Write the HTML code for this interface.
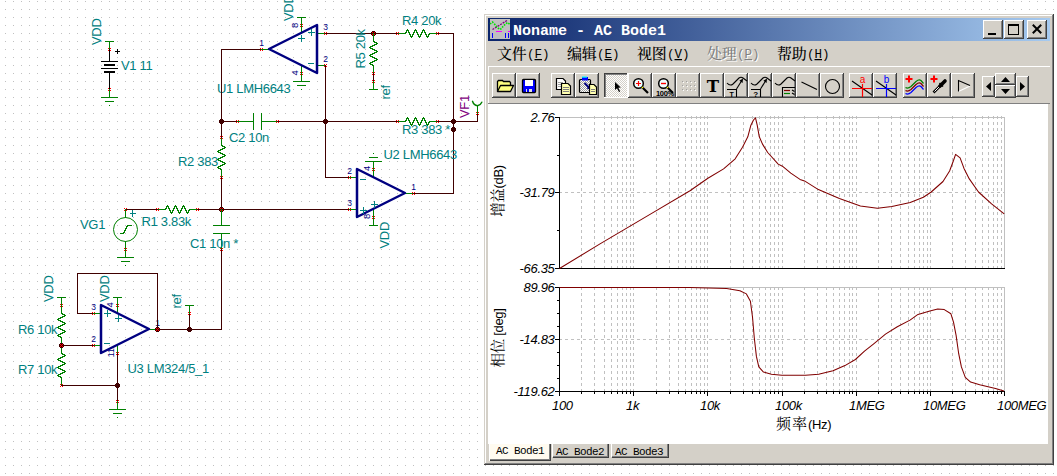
<!DOCTYPE html>
<html lang="zh"><head><meta charset="utf-8"><title>AC Bode1</title>
<style>
html,body{margin:0;padding:0;background:#fff;}
body{width:1057px;height:476px;overflow:hidden;}
svg{display:block;}
text{font-family:"Liberation Sans",Arial,sans-serif;letter-spacing:-0.32px;}
.cj{font-family:"Liberation Sans","Noto Sans CJK SC",sans-serif;}
.sj{font-family:"Liberation Serif","Noto Serif CJK SC",serif;}
.mono{font-family:"Liberation Mono",monospace;letter-spacing:0;}
</style></head><body>
<svg width="1057" height="476" viewBox="0 0 1057 476">
<defs>
<pattern id="grid" x="5" y="1" width="8" height="8" patternUnits="userSpaceOnUse"><rect x="0" y="0" width="1" height="1" fill="#c0c0c0"/></pattern>
<linearGradient id="tg" x1="0" y1="0" x2="1" y2="0"><stop offset="0" stop-color="#0a246a"/><stop offset="1" stop-color="#a6caf0"/></linearGradient>
<pattern id="chk2" x="0" y="0" width="2" height="2" patternUnits="userSpaceOnUse"><rect width="2" height="2" fill="#fff"/><rect x="0" y="0" width="1" height="1" fill="#a0a0a0"/><rect x="1" y="1" width="1" height="1" fill="#a0a0a0"/></pattern>
<pattern id="chk" x="0" y="0" width="2" height="2" patternUnits="userSpaceOnUse"><rect width="2" height="2" fill="#fff"/><rect x="0" y="0" width="1" height="1" fill="#d4d0c8"/><rect x="1" y="1" width="1" height="1" fill="#d4d0c8"/></pattern>
</defs>
<rect width="1057" height="476" fill="#fff"/>
<rect width="1057" height="476" fill="url(#grid)"/>

<g id="schematic">
<rect x="105" y="41" width="9" height="1" fill="#008000"/>
<rect x="109" y="41" width="1" height="9" fill="#008000"/>
<rect x="109" y="49" width="1" height="13" fill="#000"/>
<rect x="108" y="48" width="1" height="1" fill="#ff0000"/>
<rect x="110" y="48" width="1" height="1" fill="#ff0000"/>
<rect x="108" y="50" width="1" height="1" fill="#ff0000"/>
<rect x="110" y="50" width="1" height="1" fill="#ff0000"/>
<rect x="101" y="61" width="17" height="1" fill="#000"/>
<rect x="104" y="64" width="11" height="2" fill="#000"/>
<rect x="101" y="68" width="17" height="1" fill="#000"/>
<rect x="104" y="71" width="11" height="2" fill="#000"/>
<rect x="109" y="72" width="1" height="18" fill="#000"/>
<rect x="108" y="88" width="1" height="1" fill="#ff0000"/>
<rect x="110" y="88" width="1" height="1" fill="#ff0000"/>
<rect x="108" y="90" width="1" height="1" fill="#ff0000"/>
<rect x="110" y="90" width="1" height="1" fill="#ff0000"/>
<rect x="109" y="89" width="1" height="9" fill="#008000"/>
<rect x="101" y="97" width="17" height="1" fill="#008000"/>
<rect x="105" y="101" width="9" height="1" fill="#008000"/>
<rect x="109" y="105" width="1" height="1" fill="#008000"/>
<rect x="115" y="51" width="5" height="1" fill="#000"/>
<rect x="117" y="49" width="1" height="5" fill="#000"/>
<text x="121" y="70" font-size="13" fill="#008080" >V1 11</text>
<text transform="translate(101,45) rotate(-90)" font-size="13" fill="#008080" >VDD</text>
<rect x="221" y="49" width="41" height="1" fill="#400000"/>
<rect x="261" y="49" width="9" height="1" fill="#008000"/>
<rect x="260" y="48" width="1" height="1" fill="#ff0000"/>
<rect x="262" y="48" width="1" height="1" fill="#ff0000"/>
<rect x="260" y="50" width="1" height="1" fill="#ff0000"/>
<rect x="262" y="50" width="1" height="1" fill="#ff0000"/>
<rect x="317" y="33" width="9" height="1" fill="#008000"/>
<rect x="324" y="32" width="1" height="1" fill="#ff0000"/>
<rect x="326" y="32" width="1" height="1" fill="#ff0000"/>
<rect x="324" y="34" width="1" height="1" fill="#ff0000"/>
<rect x="326" y="34" width="1" height="1" fill="#ff0000"/>
<rect x="317" y="65" width="9" height="1" fill="#008000"/>
<rect x="324" y="64" width="1" height="1" fill="#ff0000"/>
<rect x="326" y="64" width="1" height="1" fill="#ff0000"/>
<rect x="324" y="66" width="1" height="1" fill="#ff0000"/>
<rect x="326" y="66" width="1" height="1" fill="#ff0000"/>
<rect x="301" y="17" width="1" height="17" fill="#008000"/>
<rect x="297" y="17" width="9" height="1" fill="#008000"/>
<rect x="300" y="24" width="1" height="1" fill="#ff0000"/>
<rect x="302" y="24" width="1" height="1" fill="#ff0000"/>
<rect x="300" y="26" width="1" height="1" fill="#ff0000"/>
<rect x="302" y="26" width="1" height="1" fill="#ff0000"/>
<rect x="301" y="65" width="1" height="17" fill="#008000"/>
<rect x="300" y="72" width="1" height="1" fill="#ff0000"/>
<rect x="302" y="72" width="1" height="1" fill="#ff0000"/>
<rect x="300" y="74" width="1" height="1" fill="#ff0000"/>
<rect x="302" y="74" width="1" height="1" fill="#ff0000"/>
<rect x="293" y="81" width="17" height="1" fill="#008000"/>
<rect x="297" y="85" width="9" height="1" fill="#008000"/>
<rect x="301" y="89" width="1" height="1" fill="#008000"/>
<polygon points="317,25 317,73 269,49" fill="none" stroke="#000080" stroke-width="2.5" stroke-linejoin="round"/>
<rect x="308" y="32" width="7" height="1" fill="#008080"/>
<rect x="311" y="29" width="1" height="7" fill="#008080"/>
<rect x="298" y="38" width="7" height="1" fill="#008080"/>
<rect x="301" y="35" width="1" height="7" fill="#008080"/>
<rect x="308" y="63" width="6" height="1" fill="#008080"/>
<text x="261.5" y="46" font-size="8.5" fill="#000080" text-anchor="middle" >1</text>
<text x="325.5" y="30" font-size="8.5" fill="#000080" text-anchor="middle" >3</text>
<text x="325.5" y="62" font-size="8.5" fill="#000080" text-anchor="middle" >2</text>
<text transform="translate(297.5,25.5) rotate(-90)" font-size="9.5" fill="#000080" text-anchor="middle" >8</text>
<text transform="translate(297.5,73) rotate(-90)" font-size="9.5" fill="#000080" text-anchor="middle" >4</text>
<text x="217" y="93" font-size="13" fill="#008080" >U1 LMH6643</text>
<text transform="translate(293,21) rotate(-90)" font-size="13" fill="#008080" >VDD</text>
<rect x="325" y="33" width="73" height="1" fill="#400000"/>
<rect x="396" y="32" width="1" height="1" fill="#ff0000"/>
<rect x="398" y="32" width="1" height="1" fill="#ff0000"/>
<rect x="396" y="34" width="1" height="1" fill="#ff0000"/>
<rect x="398" y="34" width="1" height="1" fill="#ff0000"/>
<rect x="398" y="33" width="8" height="1" fill="#008000"/>
<polyline points="405.50,33.50 407.50,29.50 411.50,37.50 415.50,29.50 419.50,37.50 423.50,29.50 427.50,37.50 429.50,33.50" fill="none" stroke="#008000" stroke-width="1" stroke-linejoin="bevel" shape-rendering="crispEdges" />
<rect x="429" y="33" width="8" height="1" fill="#008000"/>
<rect x="436" y="32" width="1" height="1" fill="#ff0000"/>
<rect x="438" y="32" width="1" height="1" fill="#ff0000"/>
<rect x="436" y="34" width="1" height="1" fill="#ff0000"/>
<rect x="438" y="34" width="1" height="1" fill="#ff0000"/>
<rect x="437" y="33" width="17" height="1" fill="#400000"/>
<rect x="453" y="33" width="1" height="161" fill="#400000"/>
<rect x="372" y="31" width="3" height="5" fill="#400000"/><rect x="371" y="32" width="5" height="3" fill="#400000"/>
<rect x="372" y="32" width="1" height="1" fill="#ff0000"/>
<rect x="374" y="32" width="1" height="1" fill="#ff0000"/>
<rect x="372" y="34" width="1" height="1" fill="#ff0000"/>
<rect x="374" y="34" width="1" height="1" fill="#ff0000"/>
<rect x="373" y="33" width="1" height="1" fill="#ff0000"/>
<text x="402" y="25" font-size="13" fill="#008080" >R4 20k</text>
<rect x="373" y="33" width="1" height="9" fill="#008000"/>
<polyline points="373.50,41.50 377.50,43.50 369.50,47.50 377.50,51.50 369.50,55.50 377.50,59.50 369.50,63.50 373.50,65.50" fill="none" stroke="#008000" stroke-width="1" stroke-linejoin="bevel" shape-rendering="crispEdges" />
<rect x="373" y="65" width="1" height="9" fill="#008000"/>
<rect x="372" y="72" width="1" height="1" fill="#ff0000"/>
<rect x="374" y="72" width="1" height="1" fill="#ff0000"/>
<rect x="372" y="74" width="1" height="1" fill="#ff0000"/>
<rect x="374" y="74" width="1" height="1" fill="#ff0000"/>
<rect x="373" y="73" width="1" height="9" fill="#400000"/>
<rect x="372" y="80" width="1" height="1" fill="#ff0000"/>
<rect x="374" y="80" width="1" height="1" fill="#ff0000"/>
<rect x="372" y="82" width="1" height="1" fill="#ff0000"/>
<rect x="374" y="82" width="1" height="1" fill="#ff0000"/>
<rect x="373" y="81" width="1" height="9" fill="#008000"/>
<rect x="369" y="89" width="9" height="1" fill="#008000"/>
<text transform="translate(364.7,68.5) rotate(-90)" font-size="13" fill="#008080" >R5 20k</text>
<text transform="translate(390,99.5) rotate(-90)" font-size="13" fill="#008080" >ref</text>
<rect x="221" y="49" width="1" height="89" fill="#400000"/>
<rect x="220" y="119" width="3" height="5" fill="#400000"/><rect x="219" y="120" width="5" height="3" fill="#400000"/>
<rect x="221" y="121" width="17" height="1" fill="#400000"/>
<rect x="236" y="120" width="1" height="1" fill="#ff0000"/>
<rect x="238" y="120" width="1" height="1" fill="#ff0000"/>
<rect x="236" y="122" width="1" height="1" fill="#ff0000"/>
<rect x="238" y="122" width="1" height="1" fill="#ff0000"/>
<rect x="237" y="121" width="17" height="1" fill="#008000"/>
<rect x="253" y="113" width="1" height="17" fill="#008000"/>
<rect x="261" y="113" width="1" height="17" fill="#008000"/>
<rect x="261" y="121" width="17" height="1" fill="#008000"/>
<rect x="276" y="120" width="1" height="1" fill="#ff0000"/>
<rect x="278" y="120" width="1" height="1" fill="#ff0000"/>
<rect x="276" y="122" width="1" height="1" fill="#ff0000"/>
<rect x="278" y="122" width="1" height="1" fill="#ff0000"/>
<rect x="277" y="121" width="121" height="1" fill="#400000"/>
<rect x="324" y="119" width="3" height="5" fill="#400000"/><rect x="323" y="120" width="5" height="3" fill="#400000"/>
<rect x="396" y="120" width="1" height="1" fill="#ff0000"/>
<rect x="398" y="120" width="1" height="1" fill="#ff0000"/>
<rect x="396" y="122" width="1" height="1" fill="#ff0000"/>
<rect x="398" y="122" width="1" height="1" fill="#ff0000"/>
<rect x="398" y="121" width="8" height="1" fill="#008000"/>
<polyline points="405.50,121.50 407.50,117.50 411.50,125.50 415.50,117.50 419.50,125.50 423.50,117.50 427.50,125.50 429.50,121.50" fill="none" stroke="#008000" stroke-width="1" stroke-linejoin="bevel" shape-rendering="crispEdges" />
<rect x="429" y="121" width="8" height="1" fill="#008000"/>
<rect x="436" y="120" width="1" height="1" fill="#ff0000"/>
<rect x="438" y="120" width="1" height="1" fill="#ff0000"/>
<rect x="436" y="122" width="1" height="1" fill="#ff0000"/>
<rect x="438" y="122" width="1" height="1" fill="#ff0000"/>
<rect x="437" y="121" width="41" height="1" fill="#400000"/>
<rect x="452" y="119" width="3" height="5" fill="#400000"/><rect x="451" y="120" width="5" height="3" fill="#400000"/>
<rect x="452" y="127" width="3" height="5" fill="#400000"/><rect x="451" y="128" width="5" height="3" fill="#400000"/>
<text x="229" y="142" font-size="13" fill="#008080" >C2 10n</text>
<text x="402" y="134" font-size="13" fill="#008080" >R3 383 *</text>
<rect x="477" y="113" width="1" height="9" fill="#400000"/>
<rect x="476" y="112" width="1" height="1" fill="#ff0000"/>
<rect x="478" y="112" width="1" height="1" fill="#ff0000"/>
<rect x="476" y="114" width="1" height="1" fill="#ff0000"/>
<rect x="478" y="114" width="1" height="1" fill="#ff0000"/>
<rect x="477" y="105" width="1" height="9" fill="#008000"/>
<path d="M477.5,105.7 Q473.7,105.3 472.5,101.3 M477.5,105.7 Q480.7,105 481.8,102.2" fill="none" stroke="#008000" stroke-width="1.4" stroke-linecap="round"/>
<text transform="translate(468.5,118) rotate(-90)" font-size="13" fill="#800080" >VF1</text>
<rect x="325" y="65" width="1" height="113" fill="#400000"/>
<rect x="325" y="177" width="25" height="1" fill="#400000"/>
<rect x="348" y="176" width="1" height="1" fill="#ff0000"/>
<rect x="350" y="176" width="1" height="1" fill="#ff0000"/>
<rect x="348" y="178" width="1" height="1" fill="#ff0000"/>
<rect x="350" y="178" width="1" height="1" fill="#ff0000"/>
<rect x="349" y="177" width="9" height="1" fill="#008000"/>
<rect x="220" y="136" width="1" height="1" fill="#ff0000"/>
<rect x="222" y="136" width="1" height="1" fill="#ff0000"/>
<rect x="220" y="138" width="1" height="1" fill="#ff0000"/>
<rect x="222" y="138" width="1" height="1" fill="#ff0000"/>
<rect x="221" y="138" width="1" height="8" fill="#008000"/>
<polyline points="221.50,145.50 225.50,147.50 217.50,151.50 225.50,155.50 217.50,159.50 225.50,163.50 217.50,167.50 221.50,169.50" fill="none" stroke="#008000" stroke-width="1" stroke-linejoin="bevel" shape-rendering="crispEdges" />
<rect x="221" y="169" width="1" height="8" fill="#008000"/>
<rect x="220" y="176" width="1" height="1" fill="#ff0000"/>
<rect x="222" y="176" width="1" height="1" fill="#ff0000"/>
<rect x="220" y="178" width="1" height="1" fill="#ff0000"/>
<rect x="222" y="178" width="1" height="1" fill="#ff0000"/>
<rect x="221" y="177" width="1" height="33" fill="#400000"/>
<text x="178" y="166" font-size="13" fill="#008080" >R2 383</text>
<rect x="125" y="209" width="33" height="1" fill="#400000"/>
<rect x="124" y="208" width="1" height="1" fill="#ff0000"/>
<rect x="126" y="208" width="1" height="1" fill="#ff0000"/>
<rect x="124" y="210" width="1" height="1" fill="#ff0000"/>
<rect x="126" y="210" width="1" height="1" fill="#ff0000"/>
<rect x="156" y="208" width="1" height="1" fill="#ff0000"/>
<rect x="158" y="208" width="1" height="1" fill="#ff0000"/>
<rect x="156" y="210" width="1" height="1" fill="#ff0000"/>
<rect x="158" y="210" width="1" height="1" fill="#ff0000"/>
<rect x="158" y="209" width="8" height="1" fill="#008000"/>
<polyline points="165.50,209.50 167.50,205.50 171.50,213.50 175.50,205.50 179.50,213.50 183.50,205.50 187.50,213.50 189.50,209.50" fill="none" stroke="#008000" stroke-width="1" stroke-linejoin="bevel" shape-rendering="crispEdges" />
<rect x="189" y="209" width="8" height="1" fill="#008000"/>
<rect x="196" y="208" width="1" height="1" fill="#ff0000"/>
<rect x="198" y="208" width="1" height="1" fill="#ff0000"/>
<rect x="196" y="210" width="1" height="1" fill="#ff0000"/>
<rect x="198" y="210" width="1" height="1" fill="#ff0000"/>
<rect x="197" y="209" width="153" height="1" fill="#400000"/>
<rect x="348" y="208" width="1" height="1" fill="#ff0000"/>
<rect x="350" y="208" width="1" height="1" fill="#ff0000"/>
<rect x="348" y="210" width="1" height="1" fill="#ff0000"/>
<rect x="350" y="210" width="1" height="1" fill="#ff0000"/>
<rect x="349" y="209" width="9" height="1" fill="#008000"/>
<rect x="220" y="207" width="3" height="5" fill="#400000"/><rect x="219" y="208" width="5" height="3" fill="#400000"/>
<rect x="220" y="208" width="1" height="1" fill="#ff0000"/>
<rect x="222" y="208" width="1" height="1" fill="#ff0000"/>
<rect x="220" y="210" width="1" height="1" fill="#ff0000"/>
<rect x="222" y="210" width="1" height="1" fill="#ff0000"/>
<rect x="221" y="209" width="1" height="1" fill="#ff0000"/>
<text x="141.5" y="226" font-size="13" fill="#008080" >R1 3.83k</text>
<rect x="125" y="209" width="1" height="9" fill="#008000"/>
<circle cx="125.5" cy="229.5" r="12" fill="none" stroke="#008000" stroke-width="1"/>
<rect x="125" y="241" width="1" height="17" fill="#008000"/>
<rect x="124" y="248" width="1" height="1" fill="#ff0000"/>
<rect x="126" y="248" width="1" height="1" fill="#ff0000"/>
<rect x="124" y="250" width="1" height="1" fill="#ff0000"/>
<rect x="126" y="250" width="1" height="1" fill="#ff0000"/>
<rect x="117" y="257" width="17" height="1" fill="#008000"/>
<rect x="121" y="261" width="9" height="1" fill="#008000"/>
<rect x="125" y="265" width="1" height="1" fill="#008000"/>
<polyline points="119.50,233.50 123.50,233.50 127.50,225.50 131.50,225.50" fill="none" stroke="#008000" stroke-width="1" stroke-linejoin="bevel" shape-rendering="crispEdges" />
<rect x="130" y="213" width="6" height="1" fill="#008080"/>
<rect x="132" y="210" width="1" height="7" fill="#008080"/>
<text x="80" y="229" font-size="13" fill="#008080" >VG1</text>
<rect x="221" y="209" width="1" height="17" fill="#008000"/>
<rect x="213" y="225" width="17" height="1" fill="#008000"/>
<rect x="213" y="233" width="17" height="1" fill="#008000"/>
<rect x="221" y="233" width="1" height="17" fill="#008000"/>
<rect x="220" y="248" width="1" height="1" fill="#ff0000"/>
<rect x="222" y="248" width="1" height="1" fill="#ff0000"/>
<rect x="220" y="250" width="1" height="1" fill="#ff0000"/>
<rect x="222" y="250" width="1" height="1" fill="#ff0000"/>
<rect x="221" y="249" width="1" height="81" fill="#400000"/>
<text x="190" y="248" font-size="13" fill="#008080" >C1 10n *</text>
<rect x="405" y="193" width="9" height="1" fill="#008000"/>
<rect x="412" y="192" width="1" height="1" fill="#ff0000"/>
<rect x="414" y="192" width="1" height="1" fill="#ff0000"/>
<rect x="412" y="194" width="1" height="1" fill="#ff0000"/>
<rect x="414" y="194" width="1" height="1" fill="#ff0000"/>
<rect x="413" y="193" width="41" height="1" fill="#400000"/>
<rect x="373" y="161" width="1" height="17" fill="#008000"/>
<rect x="365" y="161" width="17" height="1" fill="#008000"/>
<rect x="369" y="157" width="9" height="1" fill="#008000"/>
<rect x="373" y="153" width="1" height="1" fill="#008000"/>
<rect x="372" y="168" width="1" height="1" fill="#ff0000"/>
<rect x="374" y="168" width="1" height="1" fill="#ff0000"/>
<rect x="372" y="170" width="1" height="1" fill="#ff0000"/>
<rect x="374" y="170" width="1" height="1" fill="#ff0000"/>
<rect x="373" y="209" width="1" height="17" fill="#008000"/>
<rect x="369" y="225" width="9" height="1" fill="#008000"/>
<rect x="372" y="216" width="1" height="1" fill="#ff0000"/>
<rect x="374" y="216" width="1" height="1" fill="#ff0000"/>
<rect x="372" y="218" width="1" height="1" fill="#ff0000"/>
<rect x="374" y="218" width="1" height="1" fill="#ff0000"/>
<polygon points="357,169 357,217 405,193" fill="none" stroke="#000080" stroke-width="2.5" stroke-linejoin="round"/>
<rect x="360" y="179" width="6" height="1" fill="#008080"/>
<rect x="360" y="210" width="7" height="1" fill="#008080"/>
<rect x="363" y="207" width="1" height="7" fill="#008080"/>
<rect x="371" y="204" width="7" height="1" fill="#008080"/>
<rect x="374" y="201" width="1" height="7" fill="#008080"/>
<text x="349.5" y="174" font-size="8.5" fill="#000080" text-anchor="middle" >2</text>
<text x="349.5" y="206" font-size="8.5" fill="#000080" text-anchor="middle" >3</text>
<text x="413.5" y="190" font-size="8.5" fill="#000080" text-anchor="middle" >1</text>
<text transform="translate(370,168.5) rotate(-90)" font-size="9.5" fill="#000080" text-anchor="middle" >4</text>
<text transform="translate(370,216.5) rotate(-90)" font-size="9.5" fill="#000080" text-anchor="middle" >8</text>
<text x="383.5" y="159" font-size="13" fill="#008080" >U2 LMH6643</text>
<text transform="translate(389,248.5) rotate(-90)" font-size="13" fill="#008080" >VDD</text>
<text x="157.5" y="326" font-size="8.5" fill="#000080" text-anchor="middle" >1</text>
<rect x="77" y="313" width="17" height="1" fill="#400000"/>
<rect x="77" y="273" width="1" height="41" fill="#400000"/>
<rect x="77" y="273" width="81" height="1" fill="#400000"/>
<rect x="157" y="273" width="1" height="57" fill="#400000"/>
<rect x="92" y="312" width="1" height="1" fill="#ff0000"/>
<rect x="94" y="312" width="1" height="1" fill="#ff0000"/>
<rect x="92" y="314" width="1" height="1" fill="#ff0000"/>
<rect x="94" y="314" width="1" height="1" fill="#ff0000"/>
<rect x="93" y="313" width="9" height="1" fill="#008000"/>
<rect x="92" y="344" width="1" height="1" fill="#ff0000"/>
<rect x="94" y="344" width="1" height="1" fill="#ff0000"/>
<rect x="92" y="346" width="1" height="1" fill="#ff0000"/>
<rect x="94" y="346" width="1" height="1" fill="#ff0000"/>
<rect x="93" y="345" width="9" height="1" fill="#008000"/>
<rect x="61" y="345" width="33" height="1" fill="#400000"/>
<rect x="149" y="329" width="9" height="1" fill="#008000"/>
<rect x="157" y="329" width="65" height="1" fill="#400000"/>
<rect x="156" y="327" width="3" height="5" fill="#400000"/><rect x="155" y="328" width="5" height="3" fill="#400000"/>
<rect x="156" y="328" width="1" height="1" fill="#ff0000"/>
<rect x="158" y="328" width="1" height="1" fill="#ff0000"/>
<rect x="156" y="330" width="1" height="1" fill="#ff0000"/>
<rect x="158" y="330" width="1" height="1" fill="#ff0000"/>
<rect x="157" y="329" width="1" height="1" fill="#ff0000"/>
<rect x="188" y="327" width="3" height="5" fill="#400000"/><rect x="187" y="328" width="5" height="3" fill="#400000"/>
<rect x="189" y="313" width="1" height="17" fill="#400000"/>
<rect x="188" y="312" width="1" height="1" fill="#ff0000"/>
<rect x="190" y="312" width="1" height="1" fill="#ff0000"/>
<rect x="188" y="314" width="1" height="1" fill="#ff0000"/>
<rect x="190" y="314" width="1" height="1" fill="#ff0000"/>
<rect x="189" y="305" width="1" height="9" fill="#008000"/>
<rect x="185" y="305" width="9" height="1" fill="#008000"/>
<rect x="117" y="297" width="1" height="17" fill="#008000"/>
<rect x="113" y="297" width="9" height="1" fill="#008000"/>
<rect x="116" y="304" width="1" height="1" fill="#ff0000"/>
<rect x="118" y="304" width="1" height="1" fill="#ff0000"/>
<rect x="116" y="306" width="1" height="1" fill="#ff0000"/>
<rect x="118" y="306" width="1" height="1" fill="#ff0000"/>
<rect x="117" y="345" width="1" height="9" fill="#008000"/>
<rect x="116" y="352" width="1" height="1" fill="#ff0000"/>
<rect x="118" y="352" width="1" height="1" fill="#ff0000"/>
<rect x="116" y="354" width="1" height="1" fill="#ff0000"/>
<rect x="118" y="354" width="1" height="1" fill="#ff0000"/>
<rect x="117" y="353" width="1" height="49" fill="#400000"/>
<rect x="116" y="383" width="3" height="5" fill="#400000"/><rect x="115" y="384" width="5" height="3" fill="#400000"/>
<rect x="116" y="400" width="1" height="1" fill="#ff0000"/>
<rect x="118" y="400" width="1" height="1" fill="#ff0000"/>
<rect x="116" y="402" width="1" height="1" fill="#ff0000"/>
<rect x="118" y="402" width="1" height="1" fill="#ff0000"/>
<rect x="117" y="401" width="1" height="9" fill="#008000"/>
<rect x="109" y="409" width="17" height="1" fill="#008000"/>
<rect x="113" y="413" width="9" height="1" fill="#008000"/>
<rect x="117" y="417" width="1" height="1" fill="#008000"/>
<polygon points="101,305 101,353 149,329" fill="none" stroke="#000080" stroke-width="2.5" stroke-linejoin="round"/>
<rect x="104" y="313" width="7" height="1" fill="#008080"/>
<rect x="107" y="310" width="1" height="7" fill="#008080"/>
<rect x="115" y="318" width="7" height="1" fill="#008080"/>
<rect x="118" y="315" width="1" height="7" fill="#008080"/>
<rect x="104" y="343" width="6" height="1" fill="#008080"/>
<text x="93.5" y="310" font-size="8.5" fill="#000080" text-anchor="middle" >3</text>
<text x="93.5" y="342" font-size="8.5" fill="#000080" text-anchor="middle" >2</text>
<text transform="translate(113,305) rotate(-90)" font-size="9.5" fill="#000080" text-anchor="middle" >4</text>
<text transform="translate(114,353) rotate(-90)" font-size="9.5" fill="#000080" text-anchor="middle" >11</text>
<text transform="translate(109,302) rotate(-90)" font-size="13" fill="#008080" >VDD</text>
<text transform="translate(181,308.5) rotate(-90)" font-size="13" fill="#008080" >ref</text>
<text x="127.5" y="373" font-size="13" fill="#008080" >U3 LM324/5_1</text>
<rect x="57" y="297" width="9" height="1" fill="#008000"/>
<rect x="61" y="297" width="1" height="9" fill="#008000"/>
<rect x="60" y="304" width="1" height="1" fill="#ff0000"/>
<rect x="62" y="304" width="1" height="1" fill="#ff0000"/>
<rect x="60" y="306" width="1" height="1" fill="#ff0000"/>
<rect x="62" y="306" width="1" height="1" fill="#ff0000"/>
<rect x="61" y="306" width="1" height="8" fill="#008000"/>
<polyline points="61.50,313.50 65.50,315.50 57.50,319.50 65.50,323.50 57.50,327.50 65.50,331.50 57.50,335.50 61.50,337.50" fill="none" stroke="#008000" stroke-width="1" stroke-linejoin="bevel" shape-rendering="crispEdges" />
<rect x="61" y="337" width="1" height="8" fill="#008000"/>
<rect x="60" y="344" width="1" height="1" fill="#ff0000"/>
<rect x="62" y="344" width="1" height="1" fill="#ff0000"/>
<rect x="60" y="346" width="1" height="1" fill="#ff0000"/>
<rect x="62" y="346" width="1" height="1" fill="#ff0000"/>
<text transform="translate(53,302) rotate(-90)" font-size="13" fill="#008080" >VDD</text>
<text x="18" y="334" font-size="13" fill="#008080" >R6 10k</text>
<rect x="60" y="344" width="1" height="1" fill="#ff0000"/>
<rect x="62" y="344" width="1" height="1" fill="#ff0000"/>
<rect x="60" y="346" width="1" height="1" fill="#ff0000"/>
<rect x="62" y="346" width="1" height="1" fill="#ff0000"/>
<rect x="61" y="346" width="1" height="8" fill="#008000"/>
<polyline points="61.50,353.50 65.50,355.50 57.50,359.50 65.50,363.50 57.50,367.50 65.50,371.50 57.50,375.50 61.50,377.50" fill="none" stroke="#008000" stroke-width="1" stroke-linejoin="bevel" shape-rendering="crispEdges" />
<rect x="61" y="377" width="1" height="8" fill="#008000"/>
<rect x="60" y="384" width="1" height="1" fill="#ff0000"/>
<rect x="62" y="384" width="1" height="1" fill="#ff0000"/>
<rect x="60" y="386" width="1" height="1" fill="#ff0000"/>
<rect x="62" y="386" width="1" height="1" fill="#ff0000"/>
<rect x="61" y="385" width="57" height="1" fill="#400000"/>
<text x="18" y="374" font-size="13" fill="#008080" >R7 10k</text>
<rect x="60" y="343" width="3" height="5" fill="#400000"/><rect x="59" y="344" width="5" height="3" fill="#400000"/>
<rect x="60" y="344" width="1" height="1" fill="#ff0000"/>
<rect x="62" y="344" width="1" height="1" fill="#ff0000"/>
<rect x="60" y="346" width="1" height="1" fill="#ff0000"/>
<rect x="62" y="346" width="1" height="1" fill="#ff0000"/>
<rect x="61" y="345" width="1" height="1" fill="#ff0000"/>
</g>
<g id="win">
<rect x="484" y="14" width="570" height="451" fill="#d4d0c8" />
<rect x="484" y="464" width="570" height="1" fill="#404040"/>
<rect x="1053" y="14" width="1" height="451" fill="#404040"/>
<rect x="485" y="463" width="568" height="1" fill="#808080"/>
<rect x="1052" y="15" width="1" height="449" fill="#808080"/>
<rect x="485" y="15" width="567" height="1" fill="#fff"/>
<rect x="485" y="15" width="1" height="448" fill="#fff"/>
<rect x="488" y="18" width="562" height="23" fill="url(#tg)" />
<rect x="490" y="19" width="20" height="20" fill="#c0c0c0" />
<path d="M492.5,29.5 L507,20.5" fill="none" stroke="#800080" stroke-width="1.3" stroke-dasharray="2 1"/>
<polyline points="490,24 492.5,22 494.5,24 496.5,26.5 498.5,28.5 500,29.5 501.5,28.5 503,26.5 505.5,24 507.5,22.5 510,24.5" fill="none" stroke="#00e000" stroke-width="1.6" stroke-dasharray="1.6 1.2"/>
<rect x="496" y="31" width="6" height="1" fill="#ff00ff"/>
<rect x="508" y="31" width="2" height="1" fill="#ff00ff"/>
<rect x="492" y="33" width="1" height="5" fill="#0000ff"/>
<rect x="505" y="33" width="1" height="5" fill="#0000ff"/>
<rect x="508" y="33" width="1" height="5" fill="#0000ff"/>
<text x="513" y="35" class="mono" font-size="15" font-weight="bold" fill="#fff" xml:space="preserve">Noname - AC Bode1</text>
<rect x="983" y="20" width="20" height="19" fill="#d4d0c8" />
<rect x="983" y="38" width="20" height="1" fill="#404040"/>
<rect x="1002" y="20" width="1" height="19" fill="#404040"/>
<rect x="984" y="37" width="18" height="1" fill="#808080"/>
<rect x="1001" y="21" width="1" height="17" fill="#808080"/>
<rect x="983" y="20" width="19" height="1" fill="#fff"/>
<rect x="983" y="20" width="1" height="18" fill="#fff"/>
<rect x="1004" y="20" width="20" height="19" fill="#d4d0c8" />
<rect x="1004" y="38" width="20" height="1" fill="#404040"/>
<rect x="1023" y="20" width="1" height="19" fill="#404040"/>
<rect x="1005" y="37" width="18" height="1" fill="#808080"/>
<rect x="1022" y="21" width="1" height="17" fill="#808080"/>
<rect x="1004" y="20" width="19" height="1" fill="#fff"/>
<rect x="1004" y="20" width="1" height="18" fill="#fff"/>
<rect x="1027" y="20" width="20" height="19" fill="#d4d0c8" />
<rect x="1027" y="38" width="20" height="1" fill="#404040"/>
<rect x="1046" y="20" width="1" height="19" fill="#404040"/>
<rect x="1028" y="37" width="18" height="1" fill="#808080"/>
<rect x="1045" y="21" width="1" height="17" fill="#808080"/>
<rect x="1027" y="20" width="19" height="1" fill="#fff"/>
<rect x="1027" y="20" width="1" height="18" fill="#fff"/>
<rect x="988" y="33" width="8" height="2" fill="#000" />
<rect x="1008" y="24" width="11" height="11" fill="#000" />
<rect x="1009" y="26" width="9" height="8" fill="#d4d0c8" />
<path d="M1033.5,25.5 L1040.5,32.5 M1040.5,25.5 L1033.5,32.5" stroke="#000" stroke-width="2" stroke-linecap="square" fill="none"/>
<text x="497" y="59" class="sj" font-size="15" font-weight="500" fill="#000">文件</text>
<text x="527" y="58" class="mono" font-size="12.5" fill="#000">(<tspan text-decoration="underline">F</tspan>)</text>
<text x="567" y="59" class="sj" font-size="15" font-weight="500" fill="#000">编辑</text>
<text x="597" y="58" class="mono" font-size="12.5" fill="#000">(<tspan text-decoration="underline">E</tspan>)</text>
<text x="637" y="59" class="sj" font-size="15" font-weight="500" fill="#000">视图</text>
<text x="667" y="58" class="mono" font-size="12.5" fill="#000">(<tspan text-decoration="underline">V</tspan>)</text>
<text x="708" y="60" class="sj" font-size="15" font-weight="500" fill="#fff">处理</text>
<text x="738" y="59" class="mono" font-size="12.5" fill="#fff">(<tspan text-decoration="underline">P</tspan>)</text>
<text x="707" y="59" class="sj" font-size="15" font-weight="500" fill="#808080">处理</text>
<text x="737" y="58" class="mono" font-size="12.5" fill="#808080">(<tspan text-decoration="underline">P</tspan>)</text>
<text x="777" y="59" class="sj" font-size="15" font-weight="500" fill="#000">帮助</text>
<text x="807" y="58" class="mono" font-size="12.5" fill="#000">(<tspan text-decoration="underline">H</tspan>)</text>
<rect x="488" y="66" width="562" height="1" fill="#fff"/>
<rect x="488" y="66" width="1" height="37" fill="#fff"/>
<rect x="488" y="103" width="562" height="1" fill="#808080"/>
<rect x="492" y="73" width="24" height="25" fill="#d4d0c8" />
<rect x="492" y="97" width="24" height="1" fill="#404040"/>
<rect x="515" y="73" width="1" height="25" fill="#404040"/>
<rect x="493" y="96" width="22" height="1" fill="#808080"/>
<rect x="514" y="74" width="1" height="23" fill="#808080"/>
<rect x="492" y="73" width="23" height="1" fill="#fff"/>
<rect x="492" y="73" width="1" height="24" fill="#fff"/>
<g transform="translate(492,73)"><path d="M5.5,18.5 V8.5 L6.5,7.5 H10.5 L11.5,8.5 H17.5 L18.5,9.5 V12" fill="#ffff80" stroke="#000" stroke-width="1.3"/><path d="M5.5,18.5 L8.5,12.5 H21.5 L18.5,18.5 Z" fill="#ffff80" stroke="#000" stroke-width="1.3" stroke-linejoin="round"/></g>
<rect x="516" y="73" width="24" height="25" fill="#d4d0c8" />
<rect x="516" y="97" width="24" height="1" fill="#404040"/>
<rect x="539" y="73" width="1" height="25" fill="#404040"/>
<rect x="517" y="96" width="22" height="1" fill="#808080"/>
<rect x="538" y="74" width="1" height="23" fill="#808080"/>
<rect x="516" y="73" width="23" height="1" fill="#fff"/>
<rect x="516" y="73" width="1" height="24" fill="#fff"/>
<g transform="translate(516,73)"><rect x="6.5" y="6.5" width="13" height="13" rx="1" fill="#0000ff" stroke="#000" stroke-width="1.3"/><rect x="9" y="7" width="8" height="6" fill="#fff"/><rect x="10" y="16" width="6" height="3" fill="#e0e0e0"/><rect x="11" y="16" width="2" height="3" fill="#0000ff"/></g>
<rect x="551" y="73" width="24" height="25" fill="#d4d0c8" />
<rect x="551" y="97" width="24" height="1" fill="#404040"/>
<rect x="574" y="73" width="1" height="25" fill="#404040"/>
<rect x="552" y="96" width="22" height="1" fill="#808080"/>
<rect x="573" y="74" width="1" height="23" fill="#808080"/>
<rect x="551" y="73" width="23" height="1" fill="#fff"/>
<rect x="551" y="73" width="1" height="24" fill="#fff"/>
<g transform="translate(551,73)"><path d="M5.5,5.5 H12 L14.5,8 V16.5 H5.5 Z" fill="#fff" stroke="#000" stroke-width="1.2"/><path d="M7,9.5 H12 M7,11.5 H12 M7,13.5 H12" stroke="#a0a0a0"/><path d="M10.5,10.5 H17 L19.5,13 V21.5 H10.5 Z" fill="#ffffb0" stroke="#000" stroke-width="1.2"/><path d="M12,14.5 H18 M12,16.5 H18 M12,18.5 H18" stroke="#808080"/></g>
<rect x="575" y="73" width="24" height="25" fill="#d4d0c8" />
<rect x="575" y="97" width="24" height="1" fill="#404040"/>
<rect x="598" y="73" width="1" height="25" fill="#404040"/>
<rect x="576" y="96" width="22" height="1" fill="#808080"/>
<rect x="597" y="74" width="1" height="23" fill="#808080"/>
<rect x="575" y="73" width="23" height="1" fill="#fff"/>
<rect x="575" y="73" width="1" height="24" fill="#fff"/>
<g transform="translate(575,73)"><rect x="4.5" y="6.5" width="11" height="13" rx="1" fill="url(#chk2)" stroke="#000" stroke-width="1.2"/><rect x="7" y="4" width="6" height="3.5" fill="#0000ff"/><rect x="7" y="3.5" width="5" height="1.2" fill="#00ffff"/><path d="M9.5,10 L14,14.5" stroke="#000080" stroke-width="2"/><path d="M15.5,16.5 L11.5,15.5 L14.5,12.5 Z" fill="#000080"/><path d="M14.5,11.5 H19 L21.5,14 V21.5 H14.5 Z" fill="#ffffb0" stroke="#000" stroke-width="1.2"/><path d="M16,16.5 H20 M16,18.5 H20" stroke="#808080"/></g>
<rect x="604" y="73" width="24" height="25" fill="url(#chk)" />
<rect x="604" y="73" width="24" height="1" fill="#404040"/>
<rect x="604" y="73" width="1" height="25" fill="#404040"/>
<rect x="605" y="74" width="22" height="1" fill="#808080"/>
<rect x="605" y="74" width="1" height="23" fill="#808080"/>
<rect x="604" y="97" width="24" height="1" fill="#fff"/>
<rect x="627" y="73" width="1" height="25" fill="#fff"/>
<g transform="translate(604,73)"><path d="M11,9 V17 L13,15.2 L15,19 L16.2,18.4 L14.3,14.7 L16.8,14.5 Z" fill="#000"/></g>
<rect x="628" y="73" width="24" height="25" fill="#d4d0c8" />
<rect x="628" y="97" width="24" height="1" fill="#404040"/>
<rect x="651" y="73" width="1" height="25" fill="#404040"/>
<rect x="629" y="96" width="22" height="1" fill="#808080"/>
<rect x="650" y="74" width="1" height="23" fill="#808080"/>
<rect x="628" y="73" width="23" height="1" fill="#fff"/>
<rect x="628" y="73" width="1" height="24" fill="#fff"/>
<g transform="translate(628,73)"><circle cx="10.5" cy="10.5" r="4.8" fill="#f0ffff" stroke="#000" stroke-width="1.5"/><path d="M14,14 L20,20" stroke="#000" stroke-width="2.2"/><path d="M14,14 l1,1" stroke="#ffff00" stroke-width="1.5"/><path d="M8,10.5 H13 M10.5,8 V13" stroke="#ff0000" stroke-width="1.2"/></g>
<rect x="652" y="73" width="24" height="25" fill="#d4d0c8" />
<rect x="652" y="97" width="24" height="1" fill="#404040"/>
<rect x="675" y="73" width="1" height="25" fill="#404040"/>
<rect x="653" y="96" width="22" height="1" fill="#808080"/>
<rect x="674" y="74" width="1" height="23" fill="#808080"/>
<rect x="652" y="73" width="23" height="1" fill="#fff"/>
<rect x="652" y="73" width="1" height="24" fill="#fff"/>
<g transform="translate(652,73)"><circle cx="11.5" cy="10.5" r="4.8" fill="#f0ffff" stroke="#000" stroke-width="1.5"/><path d="M15,14 L21,20" stroke="#000" stroke-width="2.2"/><path d="M15,14 l1,1" stroke="#ffff00" stroke-width="1.5"/><path d="M9,10.5 H14" stroke="#ff0000" stroke-width="1.4"/><text x="4" y="23" font-size="7.5" font-weight="bold" fill="#000">100%</text></g>
<rect x="676" y="73" width="24" height="25" fill="#d4d0c8" />
<rect x="676" y="97" width="24" height="1" fill="#404040"/>
<rect x="699" y="73" width="1" height="25" fill="#404040"/>
<rect x="677" y="96" width="22" height="1" fill="#808080"/>
<rect x="698" y="74" width="1" height="23" fill="#808080"/>
<rect x="676" y="73" width="23" height="1" fill="#fff"/>
<rect x="676" y="73" width="1" height="24" fill="#fff"/>
<g transform="translate(676,73)"><rect x="7" y="9" width="1" height="1" fill="#fff"/><rect x="6" y="8" width="1" height="1" fill="#a0a0a0"/><rect x="11" y="9" width="1" height="1" fill="#fff"/><rect x="10" y="8" width="1" height="1" fill="#a0a0a0"/><rect x="15" y="9" width="1" height="1" fill="#fff"/><rect x="14" y="8" width="1" height="1" fill="#a0a0a0"/><rect x="19" y="9" width="1" height="1" fill="#fff"/><rect x="18" y="8" width="1" height="1" fill="#a0a0a0"/><rect x="7" y="13" width="1" height="1" fill="#fff"/><rect x="6" y="12" width="1" height="1" fill="#a0a0a0"/><rect x="11" y="13" width="1" height="1" fill="#fff"/><rect x="10" y="12" width="1" height="1" fill="#a0a0a0"/><rect x="15" y="13" width="1" height="1" fill="#fff"/><rect x="14" y="12" width="1" height="1" fill="#a0a0a0"/><rect x="19" y="13" width="1" height="1" fill="#fff"/><rect x="18" y="12" width="1" height="1" fill="#a0a0a0"/><rect x="7" y="17" width="1" height="1" fill="#fff"/><rect x="6" y="16" width="1" height="1" fill="#a0a0a0"/><rect x="11" y="17" width="1" height="1" fill="#fff"/><rect x="10" y="16" width="1" height="1" fill="#a0a0a0"/><rect x="15" y="17" width="1" height="1" fill="#fff"/><rect x="14" y="16" width="1" height="1" fill="#a0a0a0"/><rect x="19" y="17" width="1" height="1" fill="#fff"/><rect x="18" y="16" width="1" height="1" fill="#a0a0a0"/></g>
<rect x="700" y="73" width="24" height="25" fill="#d4d0c8" />
<rect x="700" y="97" width="24" height="1" fill="#404040"/>
<rect x="723" y="73" width="1" height="25" fill="#404040"/>
<rect x="701" y="96" width="22" height="1" fill="#808080"/>
<rect x="722" y="74" width="1" height="23" fill="#808080"/>
<rect x="700" y="73" width="23" height="1" fill="#fff"/>
<rect x="700" y="73" width="1" height="24" fill="#fff"/>
<g transform="translate(700,73)"><text x="12.9" y="19" font-size="16.5" font-weight="bold" text-anchor="middle" fill="#000" style="font-family:'DejaVu Serif','Liberation Serif',serif;letter-spacing:0">T</text></g>
<rect x="724" y="73" width="24" height="25" fill="#d4d0c8" />
<rect x="724" y="97" width="24" height="1" fill="#404040"/>
<rect x="747" y="73" width="1" height="25" fill="#404040"/>
<rect x="725" y="96" width="22" height="1" fill="#808080"/>
<rect x="746" y="74" width="1" height="23" fill="#808080"/>
<rect x="724" y="73" width="23" height="1" fill="#fff"/>
<rect x="724" y="73" width="1" height="24" fill="#fff"/>
<g transform="translate(724,73)"><path d="M3,10 Q6,13.5 9,11 L15,5 Q17,3.5 19,5 L23,8" fill="none" stroke="#000" stroke-width="1.1"/><path d="M12.5,16 L17.5,8" stroke="#000" stroke-width="1.1"/><path d="M19,5.5 L18.6,10 L15.4,7.8 Z" fill="#000"/><path d="M3,16.5 H12.5 M12.5,16 V24" stroke="#000" stroke-width="1.1" fill="none"/><text x="7.5" y="23.5" font-size="7" font-weight="bold" text-anchor="middle" font-family="Liberation Serif" fill="#000">T</text></g>
<rect x="748" y="73" width="24" height="25" fill="#d4d0c8" />
<rect x="748" y="97" width="24" height="1" fill="#404040"/>
<rect x="771" y="73" width="1" height="25" fill="#404040"/>
<rect x="749" y="96" width="22" height="1" fill="#808080"/>
<rect x="770" y="74" width="1" height="23" fill="#808080"/>
<rect x="748" y="73" width="23" height="1" fill="#fff"/>
<rect x="748" y="73" width="1" height="24" fill="#fff"/>
<g transform="translate(748,73)"><path d="M3,10 Q6,13.5 9,11 L15,5 Q17,3.5 19,5 L23,8" fill="none" stroke="#000" stroke-width="1.1"/><path d="M12.5,16 L17.5,8" stroke="#000" stroke-width="1.1"/><path d="M19,5.5 L18.6,10 L15.4,7.8 Z" fill="#000"/><path d="M3,16.5 H12.5 M12.5,16 V24" stroke="#000" stroke-width="1.1" fill="none"/><text x="7.5" y="23.5" font-size="8" font-weight="bold" text-anchor="middle" fill="#000">?</text></g>
<rect x="772" y="73" width="24" height="25" fill="#d4d0c8" />
<rect x="772" y="97" width="24" height="1" fill="#404040"/>
<rect x="795" y="73" width="1" height="25" fill="#404040"/>
<rect x="773" y="96" width="22" height="1" fill="#808080"/>
<rect x="794" y="74" width="1" height="23" fill="#808080"/>
<rect x="772" y="73" width="23" height="1" fill="#fff"/>
<rect x="772" y="73" width="1" height="24" fill="#fff"/>
<g transform="translate(772,73)"><path d="M3,10 Q6,13.5 9,11 L15,5 Q17,3.5 19,5 L23,8" fill="none" stroke="#000" stroke-width="1.1"/><path d="M23,14.5 H10.5 V24" fill="none" stroke="#000" stroke-width="1.1"/><path d="M12,17.5 H18" stroke="#800000" stroke-width="1.2"/><path d="M12,20.5 H18" stroke="#008000" stroke-width="1.2"/><path d="M20,17 l2.5,1.5 M20,20 l2.5,1.5" stroke="#000" stroke-width="1.2"/></g>
<rect x="796" y="73" width="24" height="25" fill="#d4d0c8" />
<rect x="796" y="97" width="24" height="1" fill="#404040"/>
<rect x="819" y="73" width="1" height="25" fill="#404040"/>
<rect x="797" y="96" width="22" height="1" fill="#808080"/>
<rect x="818" y="74" width="1" height="23" fill="#808080"/>
<rect x="796" y="73" width="23" height="1" fill="#fff"/>
<rect x="796" y="73" width="1" height="24" fill="#fff"/>
<g transform="translate(796,73)"><path d="M5.5,9 L21,16.5" stroke="#000" stroke-width="1.1"/></g>
<rect x="820" y="73" width="24" height="25" fill="#d4d0c8" />
<rect x="820" y="97" width="24" height="1" fill="#404040"/>
<rect x="843" y="73" width="1" height="25" fill="#404040"/>
<rect x="821" y="96" width="22" height="1" fill="#808080"/>
<rect x="842" y="74" width="1" height="23" fill="#808080"/>
<rect x="820" y="73" width="23" height="1" fill="#fff"/>
<rect x="820" y="73" width="1" height="24" fill="#fff"/>
<g transform="translate(820,73)"><circle cx="12.5" cy="13.5" r="7" fill="none" stroke="#000" stroke-width="1.1"/></g>
<rect x="849" y="73" width="24" height="25" fill="#d4d0c8" />
<rect x="849" y="97" width="24" height="1" fill="#404040"/>
<rect x="872" y="73" width="1" height="25" fill="#404040"/>
<rect x="850" y="96" width="22" height="1" fill="#808080"/>
<rect x="871" y="74" width="1" height="23" fill="#808080"/>
<rect x="849" y="73" width="23" height="1" fill="#fff"/>
<rect x="849" y="73" width="1" height="24" fill="#fff"/>
<g transform="translate(849,73)"><path d="M3,8 L23,22" stroke="#000" stroke-width="1.1"/><path d="M3,15.5 H23 M13.5,11 V24" stroke="#ff0000" stroke-width="1.2" fill="none"/><text x="13.3" y="10" font-size="10" text-anchor="middle" fill="#ff0000">a</text></g>
<rect x="873" y="73" width="24" height="25" fill="#d4d0c8" />
<rect x="873" y="97" width="24" height="1" fill="#404040"/>
<rect x="896" y="73" width="1" height="25" fill="#404040"/>
<rect x="874" y="96" width="22" height="1" fill="#808080"/>
<rect x="895" y="74" width="1" height="23" fill="#808080"/>
<rect x="873" y="73" width="23" height="1" fill="#fff"/>
<rect x="873" y="73" width="1" height="24" fill="#fff"/>
<g transform="translate(873,73)"><path d="M3,8 L23,22" stroke="#000" stroke-width="1.1"/><path d="M3,15.5 H23 M13.5,11 V24" stroke="#0000ff" stroke-width="1.2" fill="none"/><text x="13.3" y="10" font-size="10" text-anchor="middle" fill="#0000ff">b</text></g>
<rect x="903" y="73" width="24" height="25" fill="#d4d0c8" />
<rect x="903" y="97" width="24" height="1" fill="#404040"/>
<rect x="926" y="73" width="1" height="25" fill="#404040"/>
<rect x="904" y="96" width="22" height="1" fill="#808080"/>
<rect x="925" y="74" width="1" height="23" fill="#808080"/>
<rect x="903" y="73" width="23" height="1" fill="#fff"/>
<rect x="903" y="73" width="1" height="24" fill="#fff"/>
<g transform="translate(903,73)"><path d="M6,2.5 v7 M2.5,6 h7" stroke="#ff0000" stroke-width="2" fill="none"/><path d="M2.5,14.5 Q5,16 8,13.5 L13,8.5 Q16,6 18,7.5 L20.5,10.5" fill="none" stroke="#008000" stroke-width="1.2"/><path d="M2.5,17.5 Q5,19 8,16.5 L13,11.5 Q16,9 18,10.5 L20.5,13.5" fill="none" stroke="#800000" stroke-width="1.2"/><path d="M2.5,20.5 Q5,22 8,19.5 L13,14.5 Q16,12 18,13.5 L20.5,16.5" fill="none" stroke="#0000ff" stroke-width="1.2"/></g>
<rect x="927" y="73" width="24" height="25" fill="#d4d0c8" />
<rect x="927" y="97" width="24" height="1" fill="#404040"/>
<rect x="950" y="73" width="1" height="25" fill="#404040"/>
<rect x="928" y="96" width="22" height="1" fill="#808080"/>
<rect x="949" y="74" width="1" height="23" fill="#808080"/>
<rect x="927" y="73" width="23" height="1" fill="#fff"/>
<rect x="927" y="73" width="1" height="24" fill="#fff"/>
<g transform="translate(927,73)"><path d="M7,2.5 v7 M3.5,6 h7" stroke="#ff0000" stroke-width="2" fill="none"/><path d="M6.5,19.5 L14,12" stroke="#000" stroke-width="2.6"/><path d="M7.5,18.5 L13.5,12.5" stroke="#fff" stroke-width="1"/><path d="M13,13 L18,8" stroke="#000" stroke-width="3.6" stroke-linecap="round"/><path d="M12.5,10 L16,13.5" stroke="#000" stroke-width="1.6"/></g>
<rect x="951" y="73" width="24" height="25" fill="#d4d0c8" />
<rect x="951" y="97" width="24" height="1" fill="#404040"/>
<rect x="974" y="73" width="1" height="25" fill="#404040"/>
<rect x="952" y="96" width="22" height="1" fill="#808080"/>
<rect x="973" y="74" width="1" height="23" fill="#808080"/>
<rect x="951" y="73" width="23" height="1" fill="#fff"/>
<rect x="951" y="73" width="1" height="24" fill="#fff"/>
<g transform="translate(951,73)"><path d="M19,13 L7.5,18.5" stroke="#fff" stroke-width="1.1"/><path d="M7.5,18.5 V7.5 L19,12.5" fill="none" stroke="#000" stroke-width="1.1"/></g>
<rect x="982" y="76" width="13" height="21" fill="#d4d0c8" />
<rect x="982" y="96" width="13" height="1" fill="#404040"/>
<rect x="994" y="76" width="1" height="21" fill="#404040"/>
<rect x="983" y="95" width="11" height="1" fill="#808080"/>
<rect x="993" y="77" width="1" height="19" fill="#808080"/>
<rect x="982" y="76" width="12" height="1" fill="#fff"/>
<rect x="982" y="76" width="1" height="20" fill="#fff"/>
<rect x="1016" y="76" width="13" height="21" fill="#d4d0c8" />
<rect x="1016" y="96" width="13" height="1" fill="#404040"/>
<rect x="1028" y="76" width="1" height="21" fill="#404040"/>
<rect x="1017" y="95" width="11" height="1" fill="#808080"/>
<rect x="1027" y="77" width="1" height="19" fill="#808080"/>
<rect x="1016" y="76" width="12" height="1" fill="#fff"/>
<rect x="1016" y="76" width="1" height="20" fill="#fff"/>
<rect x="995" y="73" width="21" height="12" fill="#d4d0c8" />
<rect x="995" y="84" width="21" height="1" fill="#404040"/>
<rect x="1015" y="73" width="1" height="12" fill="#404040"/>
<rect x="996" y="83" width="19" height="1" fill="#808080"/>
<rect x="1014" y="74" width="1" height="10" fill="#808080"/>
<rect x="995" y="73" width="20" height="1" fill="#fff"/>
<rect x="995" y="73" width="1" height="11" fill="#fff"/>
<rect x="995" y="85" width="21" height="13" fill="#d4d0c8" />
<rect x="995" y="97" width="21" height="1" fill="#404040"/>
<rect x="1015" y="85" width="1" height="13" fill="#404040"/>
<rect x="996" y="96" width="19" height="1" fill="#808080"/>
<rect x="1014" y="86" width="1" height="11" fill="#808080"/>
<rect x="995" y="85" width="20" height="1" fill="#fff"/>
<rect x="995" y="85" width="1" height="12" fill="#fff"/>
<path d="M986,86.5 L991,82 V91 Z M1025,86.5 L1020,82 V91 Z M1005.5,77 L1010,82 H1001 Z M1005.5,94 L1010,89 H1001 Z" fill="#000"/>
</g>
<g id="plot">
<rect x="488" y="104" width="560" height="340" fill="#fff" />
<line x1="581.5" y1="116" x2="581.5" y2="268" stroke="#c0c0c0" stroke-width="1" stroke-dasharray="3 3" shape-rendering="crispEdges"/>
<line x1="594.5" y1="116" x2="594.5" y2="268" stroke="#c0c0c0" stroke-width="1" stroke-dasharray="3 3" shape-rendering="crispEdges"/>
<line x1="604.5" y1="116" x2="604.5" y2="268" stroke="#c0c0c0" stroke-width="1" stroke-dasharray="3 3" shape-rendering="crispEdges"/>
<line x1="611.5" y1="116" x2="611.5" y2="268" stroke="#c0c0c0" stroke-width="1" stroke-dasharray="3 3" shape-rendering="crispEdges"/>
<line x1="617.5" y1="116" x2="617.5" y2="268" stroke="#c0c0c0" stroke-width="1" stroke-dasharray="3 3" shape-rendering="crispEdges"/>
<line x1="622.5" y1="116" x2="622.5" y2="268" stroke="#c0c0c0" stroke-width="1" stroke-dasharray="3 3" shape-rendering="crispEdges"/>
<line x1="626.5" y1="116" x2="626.5" y2="268" stroke="#c0c0c0" stroke-width="1" stroke-dasharray="3 3" shape-rendering="crispEdges"/>
<line x1="630.5" y1="116" x2="630.5" y2="268" stroke="#c0c0c0" stroke-width="1" stroke-dasharray="3 3" shape-rendering="crispEdges"/>
<line x1="633.5" y1="116" x2="633.5" y2="268" stroke="#c0c0c0" stroke-width="1" stroke-dasharray="3 3" shape-rendering="crispEdges"/>
<line x1="656.5" y1="116" x2="656.5" y2="268" stroke="#c0c0c0" stroke-width="1" stroke-dasharray="3 3" shape-rendering="crispEdges"/>
<line x1="669.5" y1="116" x2="669.5" y2="268" stroke="#c0c0c0" stroke-width="1" stroke-dasharray="3 3" shape-rendering="crispEdges"/>
<line x1="678.5" y1="116" x2="678.5" y2="268" stroke="#c0c0c0" stroke-width="1" stroke-dasharray="3 3" shape-rendering="crispEdges"/>
<line x1="685.5" y1="116" x2="685.5" y2="268" stroke="#c0c0c0" stroke-width="1" stroke-dasharray="3 3" shape-rendering="crispEdges"/>
<line x1="691.5" y1="116" x2="691.5" y2="268" stroke="#c0c0c0" stroke-width="1" stroke-dasharray="3 3" shape-rendering="crispEdges"/>
<line x1="696.5" y1="116" x2="696.5" y2="268" stroke="#c0c0c0" stroke-width="1" stroke-dasharray="3 3" shape-rendering="crispEdges"/>
<line x1="700.5" y1="116" x2="700.5" y2="268" stroke="#c0c0c0" stroke-width="1" stroke-dasharray="3 3" shape-rendering="crispEdges"/>
<line x1="704.5" y1="116" x2="704.5" y2="268" stroke="#c0c0c0" stroke-width="1" stroke-dasharray="3 3" shape-rendering="crispEdges"/>
<line x1="707.5" y1="116" x2="707.5" y2="268" stroke="#c0c0c0" stroke-width="1" stroke-dasharray="3 3" shape-rendering="crispEdges"/>
<line x1="730.5" y1="116" x2="730.5" y2="268" stroke="#c0c0c0" stroke-width="1" stroke-dasharray="3 3" shape-rendering="crispEdges"/>
<line x1="743.5" y1="116" x2="743.5" y2="268" stroke="#c0c0c0" stroke-width="1" stroke-dasharray="3 3" shape-rendering="crispEdges"/>
<line x1="752.5" y1="116" x2="752.5" y2="268" stroke="#c0c0c0" stroke-width="1" stroke-dasharray="3 3" shape-rendering="crispEdges"/>
<line x1="759.5" y1="116" x2="759.5" y2="268" stroke="#c0c0c0" stroke-width="1" stroke-dasharray="3 3" shape-rendering="crispEdges"/>
<line x1="765.5" y1="116" x2="765.5" y2="268" stroke="#c0c0c0" stroke-width="1" stroke-dasharray="3 3" shape-rendering="crispEdges"/>
<line x1="770.5" y1="116" x2="770.5" y2="268" stroke="#c0c0c0" stroke-width="1" stroke-dasharray="3 3" shape-rendering="crispEdges"/>
<line x1="774.5" y1="116" x2="774.5" y2="268" stroke="#c0c0c0" stroke-width="1" stroke-dasharray="3 3" shape-rendering="crispEdges"/>
<line x1="778.5" y1="116" x2="778.5" y2="268" stroke="#c0c0c0" stroke-width="1" stroke-dasharray="3 3" shape-rendering="crispEdges"/>
<line x1="782.5" y1="116" x2="782.5" y2="268" stroke="#c0c0c0" stroke-width="1" stroke-dasharray="3 3" shape-rendering="crispEdges"/>
<line x1="804.5" y1="116" x2="804.5" y2="268" stroke="#c0c0c0" stroke-width="1" stroke-dasharray="3 3" shape-rendering="crispEdges"/>
<line x1="817.5" y1="116" x2="817.5" y2="268" stroke="#c0c0c0" stroke-width="1" stroke-dasharray="3 3" shape-rendering="crispEdges"/>
<line x1="826.5" y1="116" x2="826.5" y2="268" stroke="#c0c0c0" stroke-width="1" stroke-dasharray="3 3" shape-rendering="crispEdges"/>
<line x1="833.5" y1="116" x2="833.5" y2="268" stroke="#c0c0c0" stroke-width="1" stroke-dasharray="3 3" shape-rendering="crispEdges"/>
<line x1="839.5" y1="116" x2="839.5" y2="268" stroke="#c0c0c0" stroke-width="1" stroke-dasharray="3 3" shape-rendering="crispEdges"/>
<line x1="844.5" y1="116" x2="844.5" y2="268" stroke="#c0c0c0" stroke-width="1" stroke-dasharray="3 3" shape-rendering="crispEdges"/>
<line x1="849.5" y1="116" x2="849.5" y2="268" stroke="#c0c0c0" stroke-width="1" stroke-dasharray="3 3" shape-rendering="crispEdges"/>
<line x1="852.5" y1="116" x2="852.5" y2="268" stroke="#c0c0c0" stroke-width="1" stroke-dasharray="3 3" shape-rendering="crispEdges"/>
<line x1="856.5" y1="116" x2="856.5" y2="268" stroke="#c0c0c0" stroke-width="1" stroke-dasharray="3 3" shape-rendering="crispEdges"/>
<line x1="878.5" y1="116" x2="878.5" y2="268" stroke="#c0c0c0" stroke-width="1" stroke-dasharray="3 3" shape-rendering="crispEdges"/>
<line x1="891.5" y1="116" x2="891.5" y2="268" stroke="#c0c0c0" stroke-width="1" stroke-dasharray="3 3" shape-rendering="crispEdges"/>
<line x1="900.5" y1="116" x2="900.5" y2="268" stroke="#c0c0c0" stroke-width="1" stroke-dasharray="3 3" shape-rendering="crispEdges"/>
<line x1="908.5" y1="116" x2="908.5" y2="268" stroke="#c0c0c0" stroke-width="1" stroke-dasharray="3 3" shape-rendering="crispEdges"/>
<line x1="914.5" y1="116" x2="914.5" y2="268" stroke="#c0c0c0" stroke-width="1" stroke-dasharray="3 3" shape-rendering="crispEdges"/>
<line x1="919.5" y1="116" x2="919.5" y2="268" stroke="#c0c0c0" stroke-width="1" stroke-dasharray="3 3" shape-rendering="crispEdges"/>
<line x1="923.5" y1="116" x2="923.5" y2="268" stroke="#c0c0c0" stroke-width="1" stroke-dasharray="3 3" shape-rendering="crispEdges"/>
<line x1="927.5" y1="116" x2="927.5" y2="268" stroke="#c0c0c0" stroke-width="1" stroke-dasharray="3 3" shape-rendering="crispEdges"/>
<line x1="930.5" y1="116" x2="930.5" y2="268" stroke="#c0c0c0" stroke-width="1" stroke-dasharray="3 3" shape-rendering="crispEdges"/>
<line x1="952.5" y1="116" x2="952.5" y2="268" stroke="#c0c0c0" stroke-width="1" stroke-dasharray="3 3" shape-rendering="crispEdges"/>
<line x1="965.5" y1="116" x2="965.5" y2="268" stroke="#c0c0c0" stroke-width="1" stroke-dasharray="3 3" shape-rendering="crispEdges"/>
<line x1="975.5" y1="116" x2="975.5" y2="268" stroke="#c0c0c0" stroke-width="1" stroke-dasharray="3 3" shape-rendering="crispEdges"/>
<line x1="982.5" y1="116" x2="982.5" y2="268" stroke="#c0c0c0" stroke-width="1" stroke-dasharray="3 3" shape-rendering="crispEdges"/>
<line x1="988.5" y1="116" x2="988.5" y2="268" stroke="#c0c0c0" stroke-width="1" stroke-dasharray="3 3" shape-rendering="crispEdges"/>
<line x1="993.5" y1="116" x2="993.5" y2="268" stroke="#c0c0c0" stroke-width="1" stroke-dasharray="3 3" shape-rendering="crispEdges"/>
<line x1="997.5" y1="116" x2="997.5" y2="268" stroke="#c0c0c0" stroke-width="1" stroke-dasharray="3 3" shape-rendering="crispEdges"/>
<line x1="1001.5" y1="116" x2="1001.5" y2="268" stroke="#c0c0c0" stroke-width="1" stroke-dasharray="3 3" shape-rendering="crispEdges"/>
<rect x="1004" y="117" width="1" height="152" fill="#c0c0c0"/>
<rect x="559" y="117" width="446" height="1" fill="#c0c0c0"/>
<line x1="559" y1="192.5" x2="1005" y2="192.5" stroke="#c0c0c0" stroke-width="1" stroke-dasharray="3 3" shape-rendering="crispEdges"/>
<rect x="559" y="117" width="1" height="152" fill="#000"/>
<rect x="555" y="268" width="450" height="1" fill="#000"/>
<rect x="555" y="117" width="5" height="1" fill="#000"/>
<rect x="555" y="192" width="5" height="1" fill="#000"/>
<rect x="557" y="155" width="3" height="1" fill="#000"/>
<rect x="557" y="230" width="3" height="1" fill="#000"/>
<line x1="581.5" y1="287" x2="581.5" y2="391" stroke="#c0c0c0" stroke-width="1" stroke-dasharray="3 3" shape-rendering="crispEdges"/>
<line x1="594.5" y1="287" x2="594.5" y2="391" stroke="#c0c0c0" stroke-width="1" stroke-dasharray="3 3" shape-rendering="crispEdges"/>
<line x1="604.5" y1="287" x2="604.5" y2="391" stroke="#c0c0c0" stroke-width="1" stroke-dasharray="3 3" shape-rendering="crispEdges"/>
<line x1="611.5" y1="287" x2="611.5" y2="391" stroke="#c0c0c0" stroke-width="1" stroke-dasharray="3 3" shape-rendering="crispEdges"/>
<line x1="617.5" y1="287" x2="617.5" y2="391" stroke="#c0c0c0" stroke-width="1" stroke-dasharray="3 3" shape-rendering="crispEdges"/>
<line x1="622.5" y1="287" x2="622.5" y2="391" stroke="#c0c0c0" stroke-width="1" stroke-dasharray="3 3" shape-rendering="crispEdges"/>
<line x1="626.5" y1="287" x2="626.5" y2="391" stroke="#c0c0c0" stroke-width="1" stroke-dasharray="3 3" shape-rendering="crispEdges"/>
<line x1="630.5" y1="287" x2="630.5" y2="391" stroke="#c0c0c0" stroke-width="1" stroke-dasharray="3 3" shape-rendering="crispEdges"/>
<line x1="633.5" y1="287" x2="633.5" y2="391" stroke="#c0c0c0" stroke-width="1" stroke-dasharray="3 3" shape-rendering="crispEdges"/>
<line x1="656.5" y1="287" x2="656.5" y2="391" stroke="#c0c0c0" stroke-width="1" stroke-dasharray="3 3" shape-rendering="crispEdges"/>
<line x1="669.5" y1="287" x2="669.5" y2="391" stroke="#c0c0c0" stroke-width="1" stroke-dasharray="3 3" shape-rendering="crispEdges"/>
<line x1="678.5" y1="287" x2="678.5" y2="391" stroke="#c0c0c0" stroke-width="1" stroke-dasharray="3 3" shape-rendering="crispEdges"/>
<line x1="685.5" y1="287" x2="685.5" y2="391" stroke="#c0c0c0" stroke-width="1" stroke-dasharray="3 3" shape-rendering="crispEdges"/>
<line x1="691.5" y1="287" x2="691.5" y2="391" stroke="#c0c0c0" stroke-width="1" stroke-dasharray="3 3" shape-rendering="crispEdges"/>
<line x1="696.5" y1="287" x2="696.5" y2="391" stroke="#c0c0c0" stroke-width="1" stroke-dasharray="3 3" shape-rendering="crispEdges"/>
<line x1="700.5" y1="287" x2="700.5" y2="391" stroke="#c0c0c0" stroke-width="1" stroke-dasharray="3 3" shape-rendering="crispEdges"/>
<line x1="704.5" y1="287" x2="704.5" y2="391" stroke="#c0c0c0" stroke-width="1" stroke-dasharray="3 3" shape-rendering="crispEdges"/>
<line x1="707.5" y1="287" x2="707.5" y2="391" stroke="#c0c0c0" stroke-width="1" stroke-dasharray="3 3" shape-rendering="crispEdges"/>
<line x1="730.5" y1="287" x2="730.5" y2="391" stroke="#c0c0c0" stroke-width="1" stroke-dasharray="3 3" shape-rendering="crispEdges"/>
<line x1="743.5" y1="287" x2="743.5" y2="391" stroke="#c0c0c0" stroke-width="1" stroke-dasharray="3 3" shape-rendering="crispEdges"/>
<line x1="752.5" y1="287" x2="752.5" y2="391" stroke="#c0c0c0" stroke-width="1" stroke-dasharray="3 3" shape-rendering="crispEdges"/>
<line x1="759.5" y1="287" x2="759.5" y2="391" stroke="#c0c0c0" stroke-width="1" stroke-dasharray="3 3" shape-rendering="crispEdges"/>
<line x1="765.5" y1="287" x2="765.5" y2="391" stroke="#c0c0c0" stroke-width="1" stroke-dasharray="3 3" shape-rendering="crispEdges"/>
<line x1="770.5" y1="287" x2="770.5" y2="391" stroke="#c0c0c0" stroke-width="1" stroke-dasharray="3 3" shape-rendering="crispEdges"/>
<line x1="774.5" y1="287" x2="774.5" y2="391" stroke="#c0c0c0" stroke-width="1" stroke-dasharray="3 3" shape-rendering="crispEdges"/>
<line x1="778.5" y1="287" x2="778.5" y2="391" stroke="#c0c0c0" stroke-width="1" stroke-dasharray="3 3" shape-rendering="crispEdges"/>
<line x1="782.5" y1="287" x2="782.5" y2="391" stroke="#c0c0c0" stroke-width="1" stroke-dasharray="3 3" shape-rendering="crispEdges"/>
<line x1="804.5" y1="287" x2="804.5" y2="391" stroke="#c0c0c0" stroke-width="1" stroke-dasharray="3 3" shape-rendering="crispEdges"/>
<line x1="817.5" y1="287" x2="817.5" y2="391" stroke="#c0c0c0" stroke-width="1" stroke-dasharray="3 3" shape-rendering="crispEdges"/>
<line x1="826.5" y1="287" x2="826.5" y2="391" stroke="#c0c0c0" stroke-width="1" stroke-dasharray="3 3" shape-rendering="crispEdges"/>
<line x1="833.5" y1="287" x2="833.5" y2="391" stroke="#c0c0c0" stroke-width="1" stroke-dasharray="3 3" shape-rendering="crispEdges"/>
<line x1="839.5" y1="287" x2="839.5" y2="391" stroke="#c0c0c0" stroke-width="1" stroke-dasharray="3 3" shape-rendering="crispEdges"/>
<line x1="844.5" y1="287" x2="844.5" y2="391" stroke="#c0c0c0" stroke-width="1" stroke-dasharray="3 3" shape-rendering="crispEdges"/>
<line x1="849.5" y1="287" x2="849.5" y2="391" stroke="#c0c0c0" stroke-width="1" stroke-dasharray="3 3" shape-rendering="crispEdges"/>
<line x1="852.5" y1="287" x2="852.5" y2="391" stroke="#c0c0c0" stroke-width="1" stroke-dasharray="3 3" shape-rendering="crispEdges"/>
<line x1="856.5" y1="287" x2="856.5" y2="391" stroke="#c0c0c0" stroke-width="1" stroke-dasharray="3 3" shape-rendering="crispEdges"/>
<line x1="878.5" y1="287" x2="878.5" y2="391" stroke="#c0c0c0" stroke-width="1" stroke-dasharray="3 3" shape-rendering="crispEdges"/>
<line x1="891.5" y1="287" x2="891.5" y2="391" stroke="#c0c0c0" stroke-width="1" stroke-dasharray="3 3" shape-rendering="crispEdges"/>
<line x1="900.5" y1="287" x2="900.5" y2="391" stroke="#c0c0c0" stroke-width="1" stroke-dasharray="3 3" shape-rendering="crispEdges"/>
<line x1="908.5" y1="287" x2="908.5" y2="391" stroke="#c0c0c0" stroke-width="1" stroke-dasharray="3 3" shape-rendering="crispEdges"/>
<line x1="914.5" y1="287" x2="914.5" y2="391" stroke="#c0c0c0" stroke-width="1" stroke-dasharray="3 3" shape-rendering="crispEdges"/>
<line x1="919.5" y1="287" x2="919.5" y2="391" stroke="#c0c0c0" stroke-width="1" stroke-dasharray="3 3" shape-rendering="crispEdges"/>
<line x1="923.5" y1="287" x2="923.5" y2="391" stroke="#c0c0c0" stroke-width="1" stroke-dasharray="3 3" shape-rendering="crispEdges"/>
<line x1="927.5" y1="287" x2="927.5" y2="391" stroke="#c0c0c0" stroke-width="1" stroke-dasharray="3 3" shape-rendering="crispEdges"/>
<line x1="930.5" y1="287" x2="930.5" y2="391" stroke="#c0c0c0" stroke-width="1" stroke-dasharray="3 3" shape-rendering="crispEdges"/>
<line x1="952.5" y1="287" x2="952.5" y2="391" stroke="#c0c0c0" stroke-width="1" stroke-dasharray="3 3" shape-rendering="crispEdges"/>
<line x1="965.5" y1="287" x2="965.5" y2="391" stroke="#c0c0c0" stroke-width="1" stroke-dasharray="3 3" shape-rendering="crispEdges"/>
<line x1="975.5" y1="287" x2="975.5" y2="391" stroke="#c0c0c0" stroke-width="1" stroke-dasharray="3 3" shape-rendering="crispEdges"/>
<line x1="982.5" y1="287" x2="982.5" y2="391" stroke="#c0c0c0" stroke-width="1" stroke-dasharray="3 3" shape-rendering="crispEdges"/>
<line x1="988.5" y1="287" x2="988.5" y2="391" stroke="#c0c0c0" stroke-width="1" stroke-dasharray="3 3" shape-rendering="crispEdges"/>
<line x1="993.5" y1="287" x2="993.5" y2="391" stroke="#c0c0c0" stroke-width="1" stroke-dasharray="3 3" shape-rendering="crispEdges"/>
<line x1="997.5" y1="287" x2="997.5" y2="391" stroke="#c0c0c0" stroke-width="1" stroke-dasharray="3 3" shape-rendering="crispEdges"/>
<line x1="1001.5" y1="287" x2="1001.5" y2="391" stroke="#c0c0c0" stroke-width="1" stroke-dasharray="3 3" shape-rendering="crispEdges"/>
<rect x="1004" y="287" width="1" height="105" fill="#c0c0c0"/>
<rect x="559" y="287" width="446" height="1" fill="#c0c0c0"/>
<line x1="559" y1="339.5" x2="1005" y2="339.5" stroke="#c0c0c0" stroke-width="1" stroke-dasharray="3 3" shape-rendering="crispEdges"/>
<rect x="559" y="287" width="1" height="105" fill="#000"/>
<rect x="555" y="391" width="450" height="1" fill="#000"/>
<rect x="555" y="287" width="5" height="1" fill="#000"/>
<rect x="555" y="339" width="5" height="1" fill="#000"/>
<rect x="557" y="300" width="3" height="1" fill="#000"/>
<rect x="557" y="313" width="3" height="1" fill="#000"/>
<rect x="557" y="326" width="3" height="1" fill="#000"/>
<rect x="557" y="352" width="3" height="1" fill="#000"/>
<rect x="557" y="365" width="3" height="1" fill="#000"/>
<rect x="557" y="378" width="3" height="1" fill="#000"/>
<text x="554.5" y="121.6" font-size="13" font-style="italic" text-anchor="end" fill="#000">2.76</text>
<text x="554.5" y="196.6" font-size="13" font-style="italic" text-anchor="end" fill="#000">-31.79</text>
<text x="554.5" y="272.6" font-size="13" font-style="italic" text-anchor="end" fill="#000">-66.35</text>
<text x="554.5" y="291.6" font-size="13" font-style="italic" text-anchor="end" fill="#000">89.96</text>
<text x="554.5" y="343.6" font-size="13" font-style="italic" text-anchor="end" fill="#000">-14.83</text>
<text x="554.5" y="395.6" font-size="13" font-style="italic" text-anchor="end" fill="#000">-119.62</text>
<rect x="559" y="391" width="1" height="5" fill="#000"/>
<rect x="581" y="391" width="1" height="3" fill="#000"/>
<rect x="594" y="391" width="1" height="3" fill="#000"/>
<rect x="604" y="391" width="1" height="3" fill="#000"/>
<rect x="611" y="391" width="1" height="3" fill="#000"/>
<rect x="617" y="391" width="1" height="3" fill="#000"/>
<rect x="622" y="391" width="1" height="3" fill="#000"/>
<rect x="626" y="391" width="1" height="3" fill="#000"/>
<rect x="630" y="391" width="1" height="3" fill="#000"/>
<rect x="633" y="391" width="1" height="5" fill="#000"/>
<rect x="656" y="391" width="1" height="3" fill="#000"/>
<rect x="669" y="391" width="1" height="3" fill="#000"/>
<rect x="678" y="391" width="1" height="3" fill="#000"/>
<rect x="685" y="391" width="1" height="3" fill="#000"/>
<rect x="691" y="391" width="1" height="3" fill="#000"/>
<rect x="696" y="391" width="1" height="3" fill="#000"/>
<rect x="700" y="391" width="1" height="3" fill="#000"/>
<rect x="704" y="391" width="1" height="3" fill="#000"/>
<rect x="707" y="391" width="1" height="5" fill="#000"/>
<rect x="730" y="391" width="1" height="3" fill="#000"/>
<rect x="743" y="391" width="1" height="3" fill="#000"/>
<rect x="752" y="391" width="1" height="3" fill="#000"/>
<rect x="759" y="391" width="1" height="3" fill="#000"/>
<rect x="765" y="391" width="1" height="3" fill="#000"/>
<rect x="770" y="391" width="1" height="3" fill="#000"/>
<rect x="774" y="391" width="1" height="3" fill="#000"/>
<rect x="778" y="391" width="1" height="3" fill="#000"/>
<rect x="782" y="391" width="1" height="5" fill="#000"/>
<rect x="804" y="391" width="1" height="3" fill="#000"/>
<rect x="817" y="391" width="1" height="3" fill="#000"/>
<rect x="826" y="391" width="1" height="3" fill="#000"/>
<rect x="833" y="391" width="1" height="3" fill="#000"/>
<rect x="839" y="391" width="1" height="3" fill="#000"/>
<rect x="844" y="391" width="1" height="3" fill="#000"/>
<rect x="849" y="391" width="1" height="3" fill="#000"/>
<rect x="852" y="391" width="1" height="3" fill="#000"/>
<rect x="856" y="391" width="1" height="5" fill="#000"/>
<rect x="878" y="391" width="1" height="3" fill="#000"/>
<rect x="891" y="391" width="1" height="3" fill="#000"/>
<rect x="900" y="391" width="1" height="3" fill="#000"/>
<rect x="908" y="391" width="1" height="3" fill="#000"/>
<rect x="914" y="391" width="1" height="3" fill="#000"/>
<rect x="919" y="391" width="1" height="3" fill="#000"/>
<rect x="923" y="391" width="1" height="3" fill="#000"/>
<rect x="927" y="391" width="1" height="3" fill="#000"/>
<rect x="930" y="391" width="1" height="5" fill="#000"/>
<rect x="952" y="391" width="1" height="3" fill="#000"/>
<rect x="965" y="391" width="1" height="3" fill="#000"/>
<rect x="975" y="391" width="1" height="3" fill="#000"/>
<rect x="982" y="391" width="1" height="3" fill="#000"/>
<rect x="988" y="391" width="1" height="3" fill="#000"/>
<rect x="993" y="391" width="1" height="3" fill="#000"/>
<rect x="997" y="391" width="1" height="3" fill="#000"/>
<rect x="1001" y="391" width="1" height="3" fill="#000"/>
<rect x="1004" y="391" width="1" height="5" fill="#000"/>
<text x="552" y="410" font-size="13" font-style="italic" fill="#000">100</text>
<text x="626" y="410" font-size="13" font-style="italic" fill="#000">1k</text>
<text x="700" y="410" font-size="13" font-style="italic" fill="#000">10k</text>
<text x="775" y="410" font-size="13" font-style="italic" fill="#000">100k</text>
<text x="849" y="410" font-size="13" font-style="italic" fill="#000">1MEG</text>
<text x="923" y="410" font-size="13" font-style="italic" fill="#000">10MEG</text>
<text x="997" y="410" font-size="13" font-style="italic" fill="#000">100MEG</text>
<text x="776" y="429" font-size="13" fill="#000"><tspan class="sj" font-size="15" letter-spacing="1">频率</tspan>(Hz)</text>
<text transform="translate(503,191) rotate(-90)" font-size="13" text-anchor="middle" fill="#000"><tspan class="sj" font-size="14.5">增益</tspan>(dB)</text>
<text transform="translate(503,338) rotate(-90)" font-size="13" text-anchor="middle" fill="#000"><tspan class="sj" font-size="14.5">相位</tspan> [deg]</text>
<polyline points="559.5,268.5 600.0,243.9 650.0,214.4 690.0,190.8 707.9,178.2 723.6,168.9 735.2,158.8 742.5,147.3 747.8,136.8 750.9,125.2 753.5,120.0 755.5,117.9 757.2,125.2 759.3,136.8 762.5,144.1 767.7,152.5 778.2,164.1 782.4,166.2 790.8,173.1 800.0,179.4 804.5,180.9 818.4,189.6 839.4,198.6 860.4,205.9 877.4,208.3 891.9,206.4 910.2,202.5 923.4,197.2 931.2,192.0 943.0,181.5 949.6,171.0 953.5,160.5 955.6,154.4 960.1,157.9 964.0,168.4 969.3,178.9 978.5,192.0 991.6,203.8 1004.2,213.8" fill="none" stroke="#800000" stroke-width="1.05" stroke-linejoin="round"/>
<polyline points="559.5,287.5 690.0,287.5 726.7,288.6 739.9,290.7 746.4,293.9 750.4,301.2 752.5,317.0 754.3,338.0 756.4,356.4 758.8,366.9 763.5,372.1 771.4,374.2 781.9,375.3 805.5,375.3 818.6,374.2 833.0,370.8 844.9,365.6 855.4,359.5 864.5,351.1 873.7,343.8 885.5,334.1 897.3,326.7 910.0,320.1 918.0,314.4 929.9,311.0 937.7,309.1 944.3,309.6 950.9,313.8 953.5,322.2 956.1,335.4 958.7,353.7 961.4,366.9 965.3,377.4 970.6,382.1 979.7,384.7 995.5,388.4 1003.9,391.0" fill="none" stroke="#800000" stroke-width="1.05" stroke-linejoin="round"/>
<rect x="488" y="444" width="562" height="19" fill="#d4d0c8" />
<rect x="552" y="444" width="57" height="14" fill="#d4d0c8" />
<rect x="552" y="444" width="1" height="13" fill="#fff"/>
<rect x="553" y="457" width="56" height="1" fill="#404040"/>
<rect x="608" y="444" width="1" height="13" fill="#404040"/>
<rect x="553" y="456" width="55" height="1" fill="#808080"/>
<rect x="607" y="444" width="1" height="13" fill="#808080"/>
<text x="556" y="455" class="mono" font-size="11" style="letter-spacing:-0.6px" fill="#000" xml:space="preserve">AC Bode2</text>
<rect x="611" y="444" width="58" height="14" fill="#d4d0c8" />
<rect x="611" y="444" width="1" height="13" fill="#fff"/>
<rect x="612" y="457" width="57" height="1" fill="#404040"/>
<rect x="668" y="444" width="1" height="13" fill="#404040"/>
<rect x="612" y="456" width="56" height="1" fill="#808080"/>
<rect x="667" y="444" width="1" height="13" fill="#808080"/>
<text x="615" y="455" class="mono" font-size="11" style="letter-spacing:-0.6px" fill="#000" xml:space="preserve">AC Bode3</text>
<rect x="489" y="444" width="62" height="17" fill="#fffbf0" />
<rect x="489" y="444" width="1" height="16" fill="#fff"/>
<rect x="490" y="460" width="61" height="1" fill="#404040"/>
<rect x="550" y="444" width="1" height="16" fill="#404040"/>
<rect x="490" y="459" width="60" height="1" fill="#808080"/>
<rect x="549" y="444" width="1" height="16" fill="#808080"/>
<text x="496" y="454" class="mono" font-size="11" style="letter-spacing:-0.6px" fill="#000" xml:space="preserve">AC Bode1</text>
</g>
</svg></body></html>
